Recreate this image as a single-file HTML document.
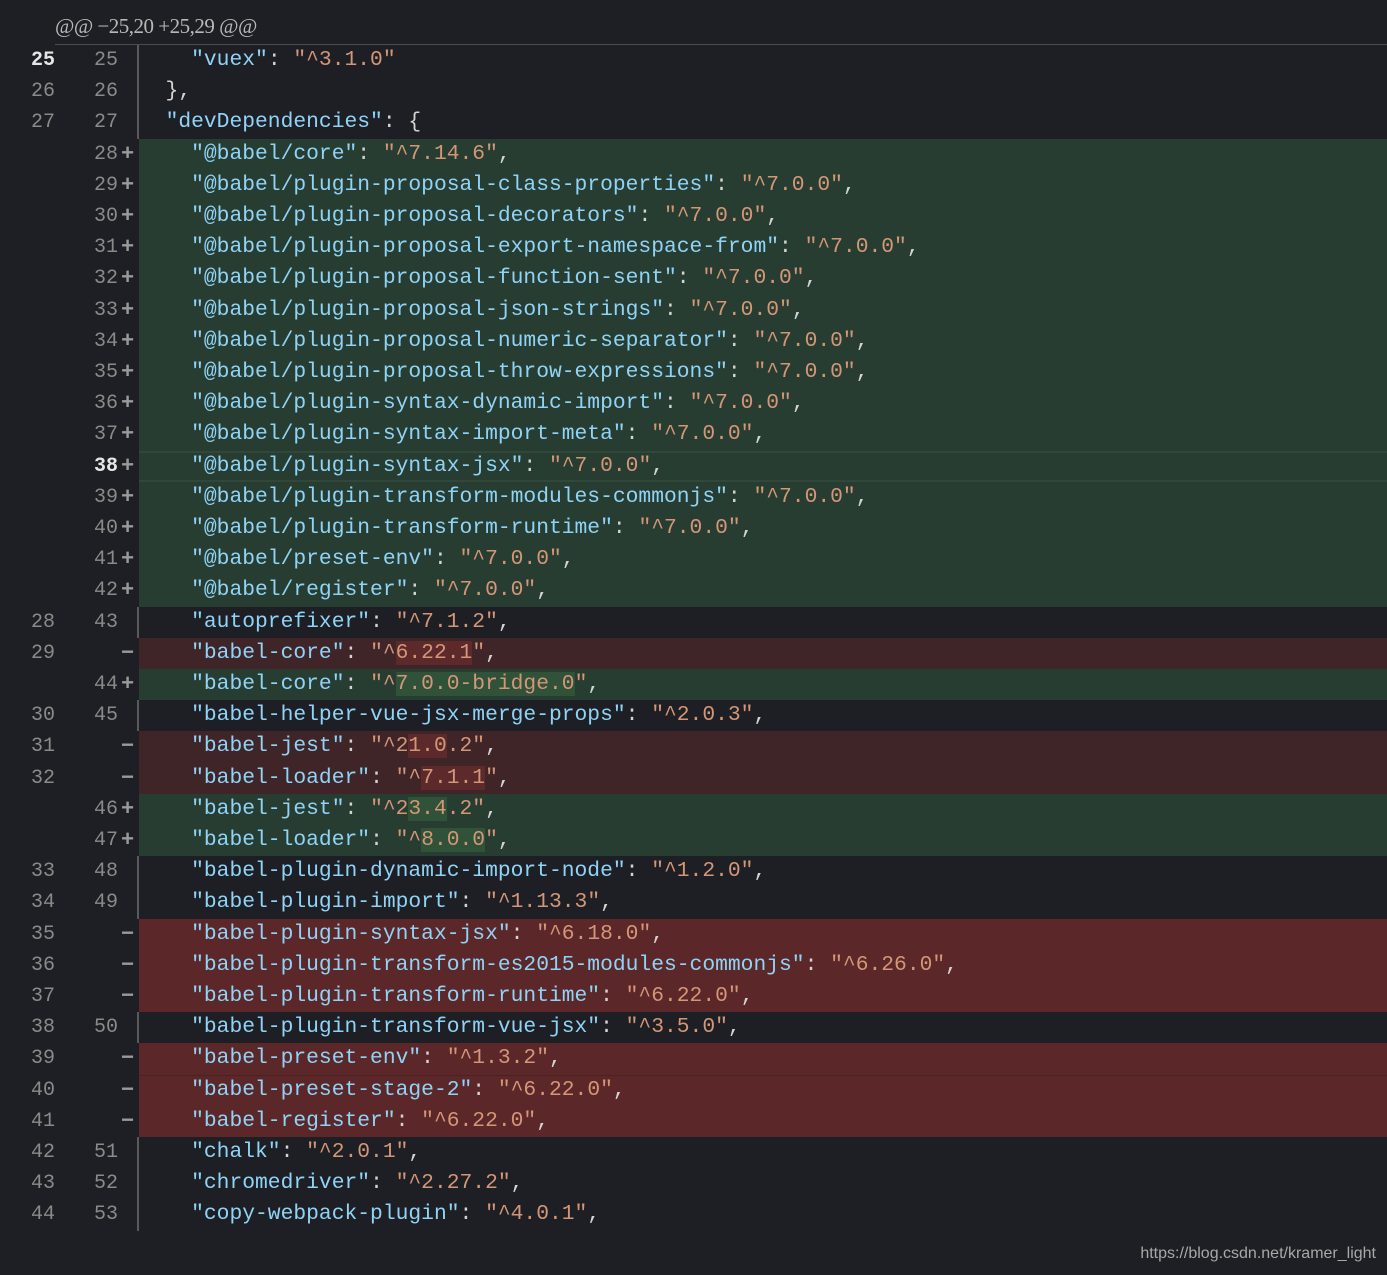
<!DOCTYPE html>
<html><head><meta charset="utf-8">
<style>
html,body{margin:0;padding:0;}
body{width:1387px;height:1275px;background:#1e1f24;position:relative;overflow:hidden;font-family:"Liberation Mono",monospace;}
.hdr{position:absolute;left:55px;top:14px;font-family:"Liberation Serif","Noto Serif CJK SC",serif;font-size:21px;color:#b8b8b8;letter-spacing:-0.5px;}
.hline{position:absolute;left:55px;right:0;top:44px;height:1px;background:#4a4b50;}
.r{position:absolute;left:0;width:1387px;height:31.2px;}
.r .bg{position:absolute;left:139px;right:0;top:0;bottom:0;}
.a .bg{background:#283d31;}
.d .bg{background:#3f2428;}
.D .bg{background:#5c2729;}
.n .bg{border-left:2px solid #5a5a5a;left:137px;}
.on,.nn{position:absolute;top:0;line-height:31px;font-size:20px;color:#8a8a8a;text-align:right;}
.on{left:0;width:55px;}
.nn{left:60px;width:58px;}
.b{color:#e6e6e6;font-weight:bold;}
.m{position:absolute;left:121px;top:0;line-height:31px;font-size:22px;font-weight:bold;color:#9a9a9a;}
.c{position:absolute;left:140px;top:0;line-height:31px;font-size:21.3px;white-space:pre;color:#d4d4d4;}
.k{color:#8fd4f7;}
.s{color:#d39677;}
.hd{background:#5c2a2b;}
.ha{background:#2f5238;}
.wm{position:absolute;right:11px;top:1245px;font-family:"Liberation Sans",sans-serif;font-size:16px;color:#a8a8a8;}
</style></head><body>
<div class="hdr">@@ −25,20 +25,29 @@</div>
<div class="hline"></div>

<div class="r n" style="top:45px"><div class="bg"></div><span class="on b">25</span><span class="nn">25</span><span class="c">    <span class="k">"vuex"</span>: <span class="s">"^3.1.0"</span></span></div>
<div class="r n" style="top:76.2px"><div class="bg"></div><span class="on">26</span><span class="nn">26</span><span class="c">  },</span></div>
<div class="r n" style="top:107.4px"><div class="bg"></div><span class="on">27</span><span class="nn">27</span><span class="c">  <span class="k">"devDependencies"</span>: {</span></div>
<div class="r a" style="top:138.6px"><div class="bg"></div><span class="nn">28</span><span class="m">+</span><span class="c">    <span class="k">"@babel/core"</span>: <span class="s">"^7.14.6"</span>,</span></div>
<div class="r a" style="top:169.8px"><div class="bg"></div><span class="nn">29</span><span class="m">+</span><span class="c">    <span class="k">"@babel/plugin-proposal-class-properties"</span>: <span class="s">"^7.0.0"</span>,</span></div>
<div class="r a" style="top:201px"><div class="bg"></div><span class="nn">30</span><span class="m">+</span><span class="c">    <span class="k">"@babel/plugin-proposal-decorators"</span>: <span class="s">"^7.0.0"</span>,</span></div>
<div class="r a" style="top:232.2px"><div class="bg"></div><span class="nn">31</span><span class="m">+</span><span class="c">    <span class="k">"@babel/plugin-proposal-export-namespace-from"</span>: <span class="s">"^7.0.0"</span>,</span></div>
<div class="r a" style="top:263.4px"><div class="bg"></div><span class="nn">32</span><span class="m">+</span><span class="c">    <span class="k">"@babel/plugin-proposal-function-sent"</span>: <span class="s">"^7.0.0"</span>,</span></div>
<div class="r a" style="top:294.6px"><div class="bg"></div><span class="nn">33</span><span class="m">+</span><span class="c">    <span class="k">"@babel/plugin-proposal-json-strings"</span>: <span class="s">"^7.0.0"</span>,</span></div>
<div class="r a" style="top:325.8px"><div class="bg"></div><span class="nn">34</span><span class="m">+</span><span class="c">    <span class="k">"@babel/plugin-proposal-numeric-separator"</span>: <span class="s">"^7.0.0"</span>,</span></div>
<div class="r a" style="top:357px"><div class="bg"></div><span class="nn">35</span><span class="m">+</span><span class="c">    <span class="k">"@babel/plugin-proposal-throw-expressions"</span>: <span class="s">"^7.0.0"</span>,</span></div>
<div class="r a" style="top:388.2px"><div class="bg"></div><span class="nn">36</span><span class="m">+</span><span class="c">    <span class="k">"@babel/plugin-syntax-dynamic-import"</span>: <span class="s">"^7.0.0"</span>,</span></div>
<div class="r a" style="top:419.4px"><div class="bg"></div><span class="nn">37</span><span class="m">+</span><span class="c">    <span class="k">"@babel/plugin-syntax-import-meta"</span>: <span class="s">"^7.0.0"</span>,</span></div>
<div class="r a" style="top:450.6px"><div class="bg" style="border-top:2px solid #31473a;border-bottom:2px solid #31473a"></div><span class="nn b">38</span><span class="m">+</span><span class="c">    <span class="k">"@babel/plugin-syntax-jsx"</span>: <span class="s">"^7.0.0"</span>,</span></div>
<div class="r a" style="top:481.8px"><div class="bg"></div><span class="nn">39</span><span class="m">+</span><span class="c">    <span class="k">"@babel/plugin-transform-modules-commonjs"</span>: <span class="s">"^7.0.0"</span>,</span></div>
<div class="r a" style="top:513px"><div class="bg"></div><span class="nn">40</span><span class="m">+</span><span class="c">    <span class="k">"@babel/plugin-transform-runtime"</span>: <span class="s">"^7.0.0"</span>,</span></div>
<div class="r a" style="top:544.2px"><div class="bg"></div><span class="nn">41</span><span class="m">+</span><span class="c">    <span class="k">"@babel/preset-env"</span>: <span class="s">"^7.0.0"</span>,</span></div>
<div class="r a" style="top:575.4px"><div class="bg"></div><span class="nn">42</span><span class="m">+</span><span class="c">    <span class="k">"@babel/register"</span>: <span class="s">"^7.0.0"</span>,</span></div>
<div class="r n" style="top:606.6px"><div class="bg"></div><span class="on">28</span><span class="nn">43</span><span class="c">    <span class="k">"autoprefixer"</span>: <span class="s">"^7.1.2"</span>,</span></div>
<div class="r d" style="top:637.8px"><div class="bg"></div><span class="on">29</span><span class="m">−</span><span class="c">    <span class="k">"babel-core"</span>: <span class="s">"^<span class="hd">6.22.1</span>"</span>,</span></div>
<div class="r a" style="top:669px"><div class="bg"></div><span class="nn">44</span><span class="m">+</span><span class="c">    <span class="k">"babel-core"</span>: <span class="s">"^<span class="ha">7.0.0-bridge.0</span>"</span>,</span></div>
<div class="r n" style="top:700.2px"><div class="bg"></div><span class="on">30</span><span class="nn">45</span><span class="c">    <span class="k">"babel-helper-vue-jsx-merge-props"</span>: <span class="s">"^2.0.3"</span>,</span></div>
<div class="r d" style="top:731.4px"><div class="bg"></div><span class="on">31</span><span class="m">−</span><span class="c">    <span class="k">"babel-jest"</span>: <span class="s">"^2<span class="hd">1.0</span>.2"</span>,</span></div>
<div class="r d" style="top:762.6px"><div class="bg"></div><span class="on">32</span><span class="m">−</span><span class="c">    <span class="k">"babel-loader"</span>: <span class="s">"^<span class="hd">7.1.1</span>"</span>,</span></div>
<div class="r a" style="top:793.8px"><div class="bg"></div><span class="nn">46</span><span class="m">+</span><span class="c">    <span class="k">"babel-jest"</span>: <span class="s">"^2<span class="ha">3.4</span>.2"</span>,</span></div>
<div class="r a" style="top:825px"><div class="bg"></div><span class="nn">47</span><span class="m">+</span><span class="c">    <span class="k">"babel-loader"</span>: <span class="s">"^<span class="ha">8.0.0</span>"</span>,</span></div>
<div class="r n" style="top:856.2px"><div class="bg"></div><span class="on">33</span><span class="nn">48</span><span class="c">    <span class="k">"babel-plugin-dynamic-import-node"</span>: <span class="s">"^1.2.0"</span>,</span></div>
<div class="r n" style="top:887.4px"><div class="bg"></div><span class="on">34</span><span class="nn">49</span><span class="c">    <span class="k">"babel-plugin-import"</span>: <span class="s">"^1.13.3"</span>,</span></div>
<div class="r D" style="top:918.6px"><div class="bg"></div><span class="on">35</span><span class="m">−</span><span class="c">    <span class="k">"babel-plugin-syntax-jsx"</span>: <span class="s">"^6.18.0"</span>,</span></div>
<div class="r D" style="top:949.8px"><div class="bg"></div><span class="on">36</span><span class="m">−</span><span class="c">    <span class="k">"babel-plugin-transform-es2015-modules-commonjs"</span>: <span class="s">"^6.26.0"</span>,</span></div>
<div class="r D" style="top:981px"><div class="bg"></div><span class="on">37</span><span class="m">−</span><span class="c">    <span class="k">"babel-plugin-transform-runtime"</span>: <span class="s">"^6.22.0"</span>,</span></div>
<div class="r n" style="top:1012.2px"><div class="bg"></div><span class="on">38</span><span class="nn">50</span><span class="c">    <span class="k">"babel-plugin-transform-vue-jsx"</span>: <span class="s">"^3.5.0"</span>,</span></div>
<div class="r D" style="top:1043.4px"><div class="bg"></div><span class="on">39</span><span class="m">−</span><span class="c">    <span class="k">"babel-preset-env"</span>: <span class="s">"^1.3.2"</span>,</span></div>
<div class="r D" style="top:1074.6px"><div class="bg" style="border-top:1px solid #4a2224"></div><span class="on">40</span><span class="m">−</span><span class="c">    <span class="k">"babel-preset-stage-2"</span>: <span class="s">"^6.22.0"</span>,</span></div>
<div class="r D" style="top:1105.8px"><div class="bg"></div><span class="on">41</span><span class="m">−</span><span class="c">    <span class="k">"babel-register"</span>: <span class="s">"^6.22.0"</span>,</span></div>
<div class="r n" style="top:1137px"><div class="bg"></div><span class="on">42</span><span class="nn">51</span><span class="c">    <span class="k">"chalk"</span>: <span class="s">"^2.0.1"</span>,</span></div>
<div class="r n" style="top:1168.2px"><div class="bg"></div><span class="on">43</span><span class="nn">52</span><span class="c">    <span class="k">"chromedriver"</span>: <span class="s">"^2.27.2"</span>,</span></div>
<div class="r n" style="top:1199.4px"><div class="bg"></div><span class="on">44</span><span class="nn">53</span><span class="c">    <span class="k">"copy-webpack-plugin"</span>: <span class="s">"^4.0.1"</span>,</span></div>

<div class="wm">https://blog.csdn.net/kramer_light</div>
</body></html>
